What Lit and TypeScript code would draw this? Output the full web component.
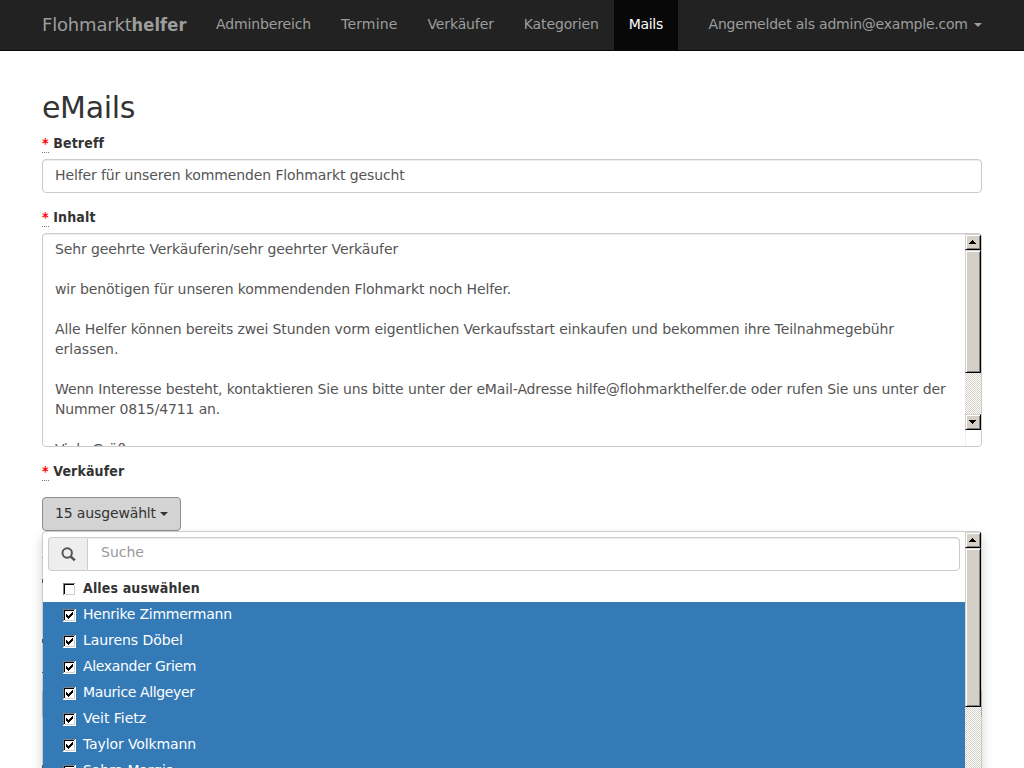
import { LitElement, html, css, svg } from "lit";
import { customElement, property } from "lit/decorators.js";

@customElement("check-box")
class CheckBox extends LitElement {
  @property({ type: Boolean }) checked = false;
  static styles = css`
    :host { display: block; width: 13px; height: 13px; }
    svg { display: block; }
  `;
  render() {
    return html`<svg width="13" height="13" shape-rendering="crispEdges">
      <rect width="13" height="13" fill="#fff" />
      <path d="M0 0H12V1H1V12H0Z" fill="#808080" />
      <path d="M1 1H11V2H2V11H1Z" fill="#000" />
      <path d="M11 2H12V12H2V11H11Z" fill="#d4d0c8" />
      ${this.checked
        ? svg`<path d="M3 5h1v1h1v1h1v-1h1v-1h1v-1h1v-1h1v3h-1v1h-1v1h-1v1h-1v1h-1v-1h-1v-1h-1z" fill="#000" />`
        : null}
    </svg>`;
  }
}

@customElement("scroll-bar")
class ScrollBar extends LitElement {
  @property({ type: Number }) thumb = 100;
  @property({ type: Number }) track = 200;
  static styles = css`
    :host { display: flex; flex-direction: column; width: 16px; flex: none; }
    .raised {
      box-sizing: border-box; width: 16px; flex: none; background: #d4d0c8;
      border: 1px solid; border-color: #d4d0c8 #000 #000 #d4d0c8;
      box-shadow: inset 1px 1px #fff, inset -1px -1px #808080;
    }
    .button { height: 16px; }
    .button svg { display: block; }
    .track {
      flex: none; width: 16px;
      background: repeating-conic-gradient(#d4d0c8 0 25%, #fff 0 50%) 0 0 / 2px 2px;
    }
    .rest { flex: 1; border-left: 1px dotted #e4e2dd; }
  `;
  render() {
    return html`
      <div class="raised button"><svg width="14" height="14" shape-rendering="crispEdges"><path d="M6 5h1v1h1v1h1v1h1v1h-7v-1h1v-1h1v-1h1z" /></svg></div>
      <div class="track" style="height:${this.track}px"><div class="raised" style="height:${this.thumb}px"></div></div>
      <div class="raised button"><svg width="14" height="14" shape-rendering="crispEdges"><path d="M3 5h7v1h-1v1h-1v1h-1v1h-1v-1h-1v-1h-1v-1h-1z" /></svg></div>
      <div class="rest"></div>
    `;
  }
}

type Tracked = [text: string, tracking: number];

@customElement("app-root")
class AppRoot extends LitElement {
  static styles = css`
    :host {
      display: block; position: relative; width: 1024px; height: 768px; overflow: hidden;
      background: #fff; color: #333; font: 14px/20px "DejaVu Sans", sans-serif;
    }
    * { box-sizing: border-box; }
    .navbar {
      display: flex; height: 51px; padding: 0 27px; background: #222;
      border-bottom: 1px solid #080808; color: #9d9d9d; white-space: nowrap;
    }
    .brand { width: 174px; font-size: 18px; padding: 15px; letter-spacing: -.18px; }
    .brand b { font-stretch: condensed; letter-spacing: .15px; }
    .nav { padding: 14px 15px 16px; }
    .active { background: #080808; color: #fff; }
    .user { margin-left: auto; letter-spacing: -.22px; }
    .caret {
      display: inline-block; border: 4px solid transparent; border-top-color: currentColor;
      border-bottom: 0; vertical-align: middle; margin-left: 2px;
    }
    .page { padding: 40px 42px 0; }
    h1 { margin: 0; font-size: 30px; line-height: 33px; font-weight: 400; letter-spacing: -.35px; }
    .label { display: block; height: 20px; font-weight: 700; font-stretch: condensed; letter-spacing: .14px; }
    .req { color: #f00; display: inline-block; height: 20px; border-bottom: 1px dotted #777; }
    .l1 { margin-top: 9px; }
    .l2 { margin-top: 14px; }
    .l3 { margin-top: 14px; }
    .input {
      height: 34px; border: 1px solid #ccc; border-radius: 4px; padding: 5px 12px; color: #555;
      box-shadow: inset 0 1px 1px rgba(0,0,0,.075);
    }
    .field { margin-top: 6px; letter-spacing: -.11px; }
    .area { margin-top: 6px; height: 214px; display: flex; padding: 0 0 0 12px; overflow: hidden; }
    .copy { flex: 1; padding-top: 5px; white-space: pre; height: 212px; overflow: hidden; }
    .line { height: 20px; }
    .btn {
      margin-top: 16px; width: 139px; height: 34px; padding: 5px 12px; border: 1px solid #8c8c8c;
      border-radius: 4px; background: #d4d4d4; color: #333; white-space: nowrap; letter-spacing: -.14px;
    }
    .btn .caret { margin-left: 0; }
    .menu {
      position: relative; display: flex; height: 300px; width: 940px; border: 1px solid #ccc;
      border-radius: 4px; background: #fff; box-shadow: 0 6px 12px rgba(0,0,0,.175);
    }
    .edge { position: absolute; width: 1px; }
    .list { flex: 1; padding-top: 5px; }
    .search { display: flex; height: 34px; margin: 0 5px; }
    .addon {
      width: 39px; background: #eee; border: 1px solid #ccc; border-right: 0;
      border-radius: 4px 0 0 4px; padding: 9px 12px;
    }
    .addon svg { display: block; }
    .search .input { flex: 1; border-radius: 0 4px 4px 0; color: #999; padding: 4px 13px; }
    .row { display: flex; height: 26px; padding: 2px 0 0 20px; background: #337ab7; color: #fff; }
    .row check-box { margin-top: 5px; margin-right: 7px; }
    .all {
      background: #fff; color: #333; height: 31px; padding-top: 7px;
      font-weight: 700; font-stretch: condensed; letter-spacing: .14px;
    }
  `;
  private navItems: Tracked[] = [["Adminbereich", -0.13], ["Termine", 0.15], ["Verkäufer", -0.13], ["Kategorien", -0.13], ["Mails", -0.3]];
  private names: Tracked[] = [
    ["Henrike Zimmermann", -0.24], ["Laurens Döbel", -0.06], ["Alexander Griem", -0.33],
    ["Maurice Allgeyer", -0.36], ["Veit Fietz", -0.03], ["Taylor Volkmann", -0.12], ["Sahra Margis", -0.12],
  ];
  private lines: Tracked[] = [
    ["Sehr geehrte Verkäuferin/sehr geehrter Verkäufer", -0.11],
    ["", 0],
    ["wir benötigen für unseren kommendenden Flohmarkt noch Helfer.", -0.115],
    ["", 0],
    ["Alle Helfer können bereits zwei Stunden vorm eigentlichen Verkaufsstart einkaufen und bekommen ihre Teilnahmegebühr", -0.122],
    ["erlassen.", 0],
    ["", 0],
    ["Wenn Interesse besteht, kontaktieren Sie uns bitte unter der eMail-Adresse hilfe@flohmarkthelfer.de oder rufen Sie uns unter der", -0.13],
    ["Nummer 0815/4711 an.", -0.13],
    ["", 0],
    ["Viele Grüße", -0.2],
  ];
  /* Parts of the covered page that show through the menu's side borders: side, top, height, colour. */
  private edges = [
    ["left", 25, 1, "#999"], ["left", 47, 4, "#555"], ["left", 107, 4, "#555"], ["left", 140, 1, "#555"],
    ["left", 159, 26, "#aaa"], ["left", 233, 5, "#555"], ["right", 159, 26, "#aaa"],
  ] as const;
  render() {
    return html`
      <div class="navbar">
        <div class="brand">Flohmarkt<b>helfer</b></div>
        ${this.navItems.map(([t, s], i) => html`<div class="nav ${i === 4 ? "active" : ""}" style="letter-spacing:${s}px">${t}</div>`)}
        <div class="nav user">Angemeldet als admin@example.com <span class="caret"></span></div>
      </div>
      <div class="page">
        <h1>eMails</h1>
        <div class="label l1"><span class="req">*</span> Betreff</div>
        <div class="input field">Helfer für unseren kommenden Flohmarkt gesucht</div>
        <div class="label l2"><span class="req">*</span> Inhalt</div>
        <div class="input area">
          <div class="copy">${this.lines.map(([t, s]) => html`<div class="line" style="letter-spacing:${s}px">${t}</div>`)}</div>
          <scroll-bar .track=${164} .thumb=${123}></scroll-bar>
        </div>
        <div class="label l3"><span class="req">*</span> Verkäufer</div>
        <div class="btn">15 ausgewählt <span class="caret"></span></div>
        <div class="menu">
          <div class="list">
            <div class="search">
              <div class="addon"><svg width="15" height="15" viewBox="0 0 15 15" fill="none" stroke="#555"><circle cx="6.2" cy="6" r="4.7" stroke-width="2" /><path d="M9.6 9.4 13.8 13.4" stroke-width="2.6" /></svg></div>
              <div class="input">Suche</div>
            </div>
            <div class="row all"><check-box></check-box>Alles auswählen</div>
            ${this.names.map(([n, s]) => html`<div class="row" style="letter-spacing:${s}px"><check-box .checked=${true}></check-box>${n}</div>`)}
          </div>
          <scroll-bar .track=${252} .thumb=${159}></scroll-bar>
          ${this.edges.map(([side, top, h, c]) => html`<span class="edge" style="${side}:-1px;top:${top}px;height:${h}px;background:${c}"></span>`)}
        </div>
      </div>
    `;
  }
}
